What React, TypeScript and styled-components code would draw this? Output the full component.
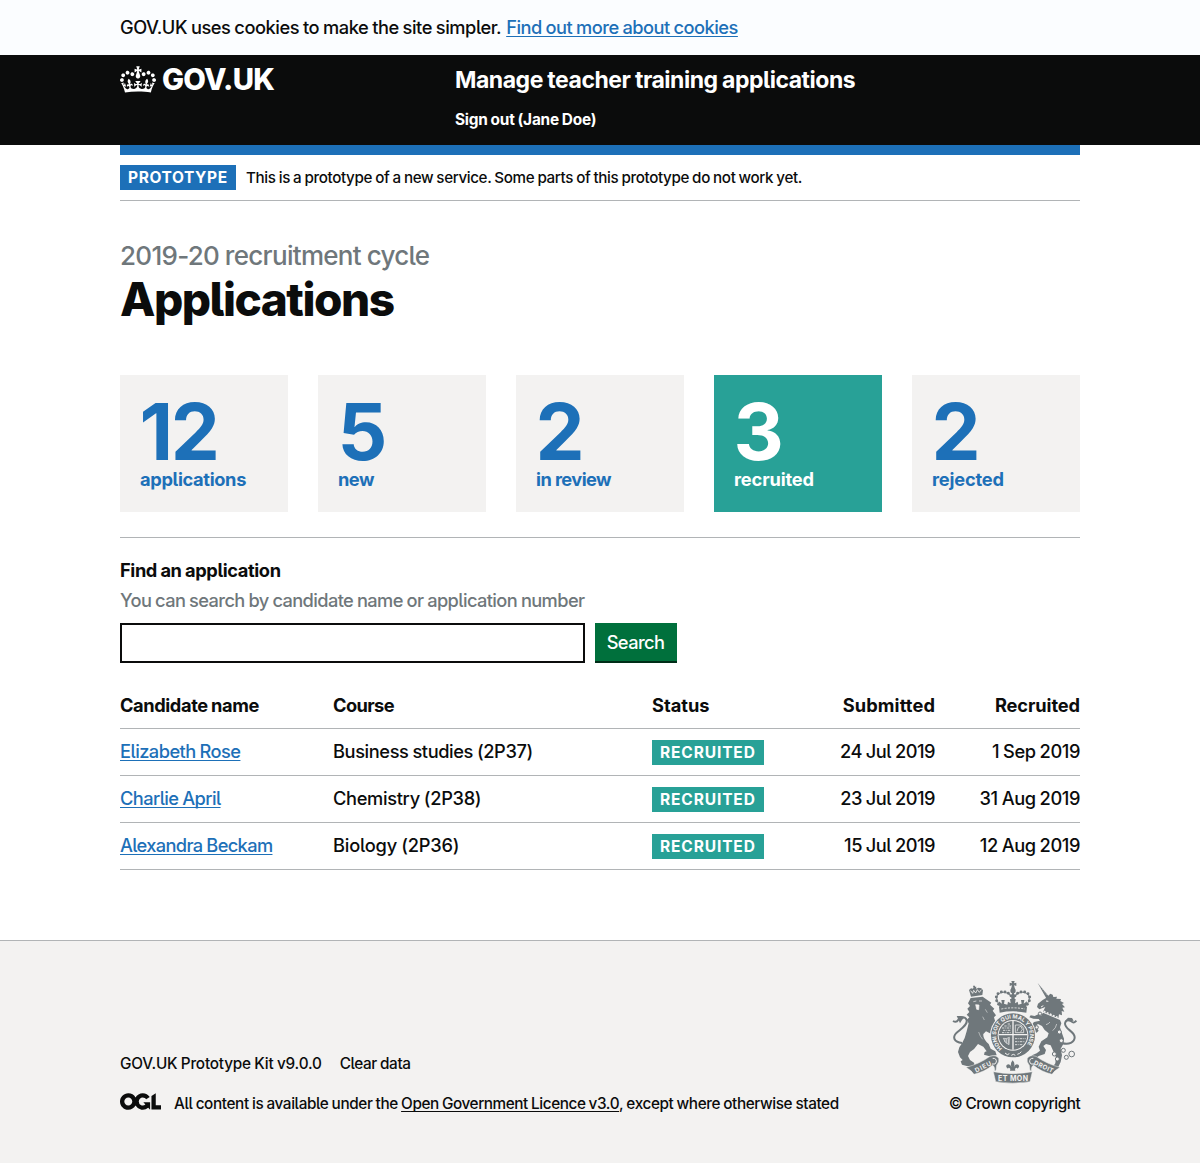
import React from "react";
import styled, { createGlobalStyle } from "styled-components";

const colour = {
  ink: "#0b0c0c",
  blue: "#1d70b8",
  teal: "#28a197",
  green: "#00703c",
  grey: "#6f777b",
  rule: "#b1b4b6",
  panel: "#f3f2f1",
  white: "#ffffff",
};

const GlobalStyle = createGlobalStyle`
  *, *::before, *::after { box-sizing: border-box; }
  body {
    margin: 0;
    background: ${colour.white};
    color: ${colour.ink};
    font-family: Inter, Roboto, "Liberation Sans", sans-serif;
    font-size: 18.25px;
    font-weight: 500;
    line-height: 25px;
    word-spacing: -0.5px;
    font-feature-settings: "cv05" 1;
  }
`;

/* A run of text with its own tracking */
const Tracked = styled.span<{ $ls: number }>`
  letter-spacing: ${(p) => p.$ls}px;
  white-space: nowrap;
`;

const Link = styled.a<{ $ls: number }>`
  color: ${colour.blue};
  letter-spacing: ${(p) => p.$ls}px;
  text-decoration: underline;
  text-decoration-thickness: 1px;
  text-underline-offset: 2px;
  text-decoration-skip-ink: none;
  white-space: nowrap;
`;

const Container = styled.div`
  width: 960px;
  margin: 0 auto;
`;

const CookieBar = styled.div`
  background: #fbfdff;
  padding: 15px 0;
`;

const CookieText = styled.p`
  display: flex;
  gap: 5px;
  margin: 0;
`;

const Header = styled.header`
  background: ${colour.ink};
  color: ${colour.white};
  height: 90px;
`;

const HeaderRow = styled(Container)`
  display: grid;
  grid-template-columns: 335px 1fr;
  padding-top: 9px;
`;

const Logo = styled.a`
  display: flex;
  align-items: center;
  gap: 6px;
  height: 30px;
  font-size: 29.3px;
  font-weight: 800;
  line-height: 32px;
  svg { display: block; }
`;

const LogoText = styled(Tracked)`
  padding-top: 2px;
`;

const ServiceName = styled.div`
  padding-top: 1px;
  font-size: 23px;
  font-weight: 700;
  line-height: 30px;
`;

const SignOut = styled.div`
  margin-top: 15px;
  font-size: 15.4px;
  font-weight: 700;
  line-height: 20px;
`;

const PhaseBanner = styled(Container)`
  display: flex;
  align-items: center;
  gap: 10px;
  height: 56px;
  padding: 10px 0;
  border-top: 10px solid ${colour.blue};
  border-bottom: 1px solid ${colour.rule};
  font-size: 15.2px;
`;

const Tag = styled.strong<{ $bg: string; $width: number; $ls: number }>`
  display: block;
  width: ${(p) => p.$width}px;
  height: 25px;
  padding-left: 8px;
  background: ${(p) => p.$bg};
  color: ${colour.white};
  font-size: 15.5px;
  font-weight: 700;
  line-height: 25px;
  letter-spacing: ${(p) => p.$ls}px;
  white-space: nowrap;
`;

const Main = styled(Container).attrs({ as: "main" })`
  padding: 40px 0 70px;
`;

const Caption = styled.div`
  color: ${colour.grey};
  font-size: 26px;
  line-height: 30px;
  letter-spacing: -0.7px;
`;

const Title = styled.h1`
  margin: 0 0 48px;
  font-size: 46px;
  font-weight: 800;
  line-height: 56px;
  letter-spacing: -1.5px;
`;

const Cards = styled.div`
  display: grid;
  grid-template-columns: repeat(5, 168px);
  gap: 30px;
  padding-bottom: 25px;
  border-bottom: 1px solid ${colour.rule};
`;

const Card = styled.a<{ $active?: boolean }>`
  display: flex;
  flex-direction: column;
  height: 137px;
  padding: 21px 20px 0;
  background: ${(p) => (p.$active ? colour.teal : colour.panel)};
  color: ${(p) => (p.$active ? colour.white : colour.blue)};
  font-weight: 700;
  word-spacing: 0;
`;

const Count = styled.div`
  margin-left: -0.5px;
  font-size: 78px;
  line-height: 71px;
  letter-spacing: -2.5px;
`;

const Field = styled.form`
  display: flex;
  flex-direction: column;
  padding: 20px 0;
`;

const Label = styled.label`
  font-weight: 700;
  letter-spacing: -0.39px;
`;

const Hint = styled.span`
  margin: 5px 0 10px;
  color: ${colour.grey};
  letter-spacing: -0.61px;
`;

const SearchRow = styled.div`
  display: flex;
  gap: 10px;
`;

const Input = styled.input`
  width: 465px;
  height: 40px;
  border: 2px solid ${colour.ink};
  border-radius: 0;
  background: ${colour.white};
`;

const Button = styled.button`
  width: 82px;
  height: 38px;
  padding: 0 1px 0 0;
  border: 0;
  background: ${colour.green};
  box-shadow: 0 2px 0 #002d18;
  color: ${colour.white};
  font: inherit;
  letter-spacing: -0.6px;
`;

const Table = styled.table`
  width: 960px;
  table-layout: fixed;
  border-collapse: collapse;
`;

const Head = styled.th<{ $width: number; $right?: boolean; $last?: boolean }>`
  width: ${(p) => p.$width}px;
  height: 45px;
  padding: 1px ${(p) => (p.$last ? 0 : 20)}px 0 0;
  border-bottom: 1px solid ${colour.rule};
  text-align: ${(p) => (p.$right ? "right" : "left")};
  font-weight: 700;
`;

const Cell = styled.td<{ $right?: boolean; $last?: boolean }>`
  height: 47px;
  padding: 0 ${(p) => (p.$last ? 0 : 20)}px 0 0;
  border-bottom: 1px solid ${colour.rule};
  text-align: ${(p) => (p.$right ? "right" : "left")};
`;

const TagSlot = styled.div`
  padding-top: 1px;
`;

const Footer = styled.footer`
  height: 223px;
  padding-top: 39px;
  border-top: 1px solid ${colour.rule};
  background: ${colour.panel};
  font-size: 15.3px;
  line-height: 20px;
`;

const FooterRow = styled(Container)`
  display: flex;
  justify-content: space-between;
  align-items: flex-end;
`;

const FooterMeta = styled.div`
  display: flex;
  flex-direction: column;
  gap: 20px;
`;

const FooterLine = styled.div<{ $gap: number }>`
  display: flex;
  align-items: center;
  gap: ${(p) => p.$gap}px;
`;

const OglIcon = styled.svg`
  display: block;
  margin-top: -4px;
`;

const FooterLink = styled(Link)`
  color: ${colour.ink};
`;

const Copyright = styled.div`
  display: flex;
  flex-direction: column;
  align-items: center;
  gap: 10px;
  width: 131px;
`;

const CrownIcon = () => (
  <svg width="36" height="27" viewBox="0 0 132 97" fill="currentColor" aria-hidden="true">
    <path
      fillRule="evenodd"
      d="M25 30.2c3.5 1.5 7.7-.2 9.1-3.7 1.5-3.6-.2-7.8-3.9-9.2-3.6-1.4-7.6.3-9.1 3.9-1.4 3.5.3 7.5 3.9 9zM9 39.5c3.6 1.5 7.8-.2 9.2-3.7 1.5-3.6-.2-7.8-3.9-9.1-3.6-1.5-7.6.2-9.1 3.8-1.4 3.5.3 7.5 3.8 9zM4.4 57.2c3.5 1.5 7.7-.2 9.1-3.8 1.5-3.6-.2-7.7-3.9-9.1-3.5-1.5-7.6.3-9.1 3.8-1.4 3.5.3 7.6 3.9 9.1zm38.3-21.4c3.5 1.5 7.7-.2 9.1-3.8 1.5-3.6-.2-7.7-3.9-9.1-3.6-1.5-7.6.3-9.1 3.8-1.3 3.6.4 7.7 3.9 9.1zm64.4-5.6c-3.6 1.5-7.8-.2-9.1-3.7-1.5-3.6.2-7.8 3.8-9.2 3.6-1.4 7.7.3 9.2 3.9 1.3 3.5-.4 7.5-3.9 9zm15.9 9.3c-3.6 1.5-7.7-.2-9.1-3.7-1.5-3.6.2-7.8 3.7-9.1 3.6-1.5 7.7.2 9.2 3.8 1.5 3.5-.3 7.5-3.8 9zm4.7 17.7c-3.6 1.5-7.8-.2-9.2-3.8-1.5-3.6.2-7.7 3.9-9.1 3.6-1.5 7.7.3 9.2 3.8 1.3 3.5-.4 7.6-3.9 9.1zM89.3 35.8c-3.6 1.5-7.8-.2-9.2-3.8-1.4-3.6.2-7.7 3.9-9.1 3.6-1.5 7.7.3 9.2 3.8 1.4 3.6-.3 7.7-3.9 9.1zM69.7 17.7l8.9 4.7V9.3l-8.9 2.8c-.2-.3-.5-.6-.9-.9L72.4 0H59.6l3.5 11.2c-.3.3-.6.5-.9.9l-8.8-2.8v13.1l8.8-4.7c.3.3.6.7.9.9l-5 15.4v.1c-.2.8-.4 1.6-.4 2.4 0 4.1 3.1 7.5 7 8.1h.2c.3 0 .7.1 1 .1.4 0 .7 0 1-.1h.2c4-.6 7.1-4.1 7.1-8.1 0-.8-.1-1.7-.4-2.4V34l-5.1-15.4c.4-.2.7-.6 1-.9zM66 92.8c16.9 0 32.8 1.1 47.1 3.2 4-16.9 8.9-26.7 14-33.5l-9.6-3.4c1 4.9 1.1 7.2 0 10.2-1.5-1.4-3-4.3-4.2-8.7L108.6 76c2.8-2 5-3.2 7.5-3.3-4.4 9.4-10 11.9-13.6 11.2-4.3-.8-6.3-4.6-5.6-7.9 1-4.7 5.7-5.9 8-.5 4.3-8.7-3-11.4-7.6-8.8 7.1-7.2 7.9-13.5 2.1-21.1-8 6.1-8.1 12.3-4.5 20.8-4.7-5.4-12.1-2.5-9.5 6.2 3.4-5.2 7.9-2 7.2 3.1-.6 4.3-6.4 7.8-13.5 7.2-10.3-.9-10.9-8-11.2-13.8 2.5-.5 7.1 1.8 11 7.3L80.2 60c-4.1 4.4-8 5.3-12.3 5.4 1.4-4.4 8-11.6 8-11.6H55.5s6.4 7.2 7.9 11.6c-4.2-.1-8-1-12.3-5.4l1.4 16.4c3.9-5.5 8.5-7.7 10.9-7.3-.3 5.8-.9 12.8-11.1 13.8-7.2.6-12.9-2.9-13.5-7.2-.7-5 3.8-8.3 7.1-3.1 2.7-8.7-4.6-11.6-9.4-6.2 3.7-8.5 3.6-14.7-4.6-20.8-5.8 7.6-5 13.9 2.2 21.1-4.7-2.6-11.9.1-7.7 8.8 2.3-5.5 7.1-4.2 8.1.5.7 3.3-1.3 7.1-5.7 7.9-3.5.7-9-1.8-13.5-11.2 2.5.1 4.7 1.3 7.5 3.3l-4.7-15.4c-1.2 4.4-2.7 7.2-4.3 8.7-1.1-3-.9-5.3 0-10.2l-9.5 3.4c5 6.9 9.9 16.7 14 33.5 14.8-2.1 30.8-3.2 47.7-3.2z"
    />
  </svg>
);

const OglLogo = () => (
  <OglIcon width="41" height="17" viewBox="0 0 483.2 195.7" fill="currentColor" aria-hidden="true">
    <path d="M421.5 142.8V.1l-50.7 32.3v161.1h112.4v-50.7zm-122.3-9.6A47.12 47.12 0 0 1 221 97.8c0-26 21.1-47.1 47.1-47.1 16.7 0 31.4 8.7 39.7 21.8l42.7-27.2A97.63 97.63 0 0 0 268.1 0c-36.5 0-68.3 20.1-85.1 49.7A98 98 0 0 0 97.8 0C43.9 0 0 43.9 0 97.8s43.9 97.8 97.8 97.8c36.5 0 68.3-20.1 85.1-49.7a97.76 97.76 0 0 0 149.6 25.4l19.4 22.2h3v-87.8h-80l24.3 27.5zM97.8 145c-26 0-47.1-21.1-47.1-47.1s21.1-47.1 47.1-47.1 47.1 21.1 47.1 47.1S123.8 145 97.8 145" />
  </OglIcon>
);

const CrestText = styled.text`
  fill: ${colour.panel};
  font-family: Inter, "Liberation Sans", sans-serif;
  font-weight: 700;
  word-spacing: 0;
`;

const archDots = [
  [176, 103], [170, 92], [169, 81], [174, 71], [184, 66], [195, 66], [205, 70], [213, 77],
];

const RoyalArms = () => {
  const g = "#6f777b";
  const bg = colour.panel;
  return (
    <svg width="128" height="104" viewBox="33 30 384 312" fill={g} aria-hidden="true">
      {/* centre crown */}
      <path d="M214 33h10l-2 7 7-2v10l-7-2 3 11h-12l3-11-7 2V38l7 2z" />
      <circle cx="219" cy="62" r="8" />
      <path d="M216 68h6v24h-6z" />
      <path d="M177 103C162 82 174 67 190 67c14 0 23 8 26 20M261 103c15-21 3-36-13-36-14 0-23 8-26 20" fill="none" stroke={g} strokeWidth="3" />
      {archDots.map(([x, y]) => (
        <React.Fragment key={`${x}-${y}`}>
          <circle cx={x} cy={y} r="4.4" />
          <circle cx={438 - x} cy={y} r="4.4" />
        </React.Fragment>
      ))}
      <path d="M178 112l-2-18 10 7-2-11h10l-2 11 10 3 2-9 8 5-2-13h17l-2 13 8-5 2 9 10-3-2-11h10l-2 11 10-7-2 18z" />
      <path d="M177 111q42-10 84 0l-2 17q-40-8-80 0z" />
      <path d="M184 117q35-7 71 0" fill="none" stroke={bg} strokeWidth="2.5" strokeDasharray="6 4" />

      {/* lion: tail, crown, body */}
      <path d="M66 219C42 216 36 202 50 188c14-12 34-24 30-38-4-11-18-11-25-1-4 7-9 8-16 4" fill="none" stroke={g} strokeWidth="6" />
      <path d="M54 146l-4-8 14 0 10 4-8 8-6 10z" />
      <path d="M90 70l-3-10 6-5 6 1 2-6h-2v-3h6v3h4l-1 6 8-3 8 2 5 6-2 14-34 5z" />
      <path d="M92 62l6 8 3-9 6 8 5-10 6 8 6-8" fill="none" stroke={bg} strokeWidth="2.5" />
      <path d="M92 84L128 80 142 90 154 98 150 104 163 116 158 122 168 136 162 142 166 156 158 168 164 178 168 196 160 206 152 200 150 190 138 184 130 192Q128 206 146 222L152 236 166 244 170 256 146 258 132 254 134 246 140 244 130 230 114 222Q104 238 90 246L84 258 90 270 102 278 104 288 80 288 66 284 62 274 68 270 60 262 54 246 58 232 66 220 74 204 80 184 86 160 80 150 88 142 80 134 88 126 82 116 90 108 84 100Z" />
      <path d="M100 95l9-2M117 93l9 0M107 104l10 1-1 14-6-1z" fill={bg} stroke={bg} strokeWidth="2" />
      <path d="M136 118l6 10M128 140l5 10M116 186q4 14 12 22" fill="none" stroke={bg} strokeWidth="1.5" />

      {/* unicorn: horn, head, body, tail */}
      <path d="M293 39l35 42-8 6z" />
      <path d="M299 47l22 29" stroke={bg} strokeWidth="1.4" strokeDasharray="2.5 4" />
      <path d="M318 84l13-13 7 3 2 7 11-1-2 6 14 1-2 6 11 6-6 3 9 10-8 1 6 12-8-2 1 13-9-3-2 12-46-20 7-14-10 4-8 3-7-7 3-10 14-11z" />
      <path d="M318 93l7 1M303 111l7-4" stroke={bg} strokeWidth="3" />
      <path d="M311 124l49 22" stroke={bg} strokeWidth="5" strokeDasharray="6 4" />
      <path d="M309 128L360 150 364 160 360 172 366 190 372 206 370 222 362 236 366 256 362 276 352 296 336 294 346 280 348 262 340 244 332 226 318 222 310 228 318 240 314 252 296 258 284 268 270 264 276 256 290 250 300 242 296 230 304 214 322 202 326 190 314 180 306 168 294 162 286 168 296 182 290 188 280 184 272 168 282 156 300 152 296 147 280 146 268 142 272 136 284 138 296 132 303 137Z" />
      <path d="M350 162q-2 12-12 20M330 156q-4 6-12 8" fill="none" stroke={bg} strokeWidth="1.8" />
      <path d="M366 219c20 7 38-2 38-17 0-18-30-24-29-42 2-11 13-12 20-5 5 5 10 2 14-3" fill="none" stroke={g} strokeWidth="6" />
      <path d="M376 152l8-9 12 1 5 8-13 2z" />
      <g fill={bg} stroke={g} strokeWidth="3">
        <circle cx="300" cy="131" r="5" /><circle cx="290" cy="172" r="5" />
        <circle cx="358" cy="186" r="6" /><circle cx="364" cy="212" r="6" /><circle cx="343" cy="252" r="6" />
        <circle cx="352" cy="267" r="6" /><circle cx="370" cy="241" r="6" /><circle cx="379" cy="262" r="6" /><circle cx="395" cy="252" r="8.5" />
      </g>

      {/* garter and shield */}
      <circle cx="219" cy="196" r="69" fill={bg} />
      <circle cx="219" cy="196" r="66" />
      <circle cx="219" cy="196" r="46" fill={bg} />
      <defs>
        <path id="garter" d="M187 235a50.5 50.5 0 1 1 64 0" />
      </defs>
      <CrestText fontSize="16.5" textLength="232" lengthAdjust="spacing">
        <textPath href="#garter">HONI SOIT QUI MAL Y PENSE</textPath>
      </CrestText>
      <path d="M195 249l7 5 6-3M214 256l6-3 6 3M232 253l7-3 5-5" fill="none" stroke={bg} strokeWidth="3" />
      <circle cx="219" cy="196" r="43" />
      <path d="M219 153v86M176 194h86" stroke={bg} strokeWidth="4" />
      <path d="M186 174h27M189 181h24M193 168h20M203 162h10M225 206h32M225 215h29M225 224h22M186 188h27" stroke={bg} strokeWidth="2.4" strokeDasharray="7 3 3 2" />
      <path d="M226 165h17l8 10v13h-25zM231 184l4-12 8-3 4 9-5 8" fill="none" stroke={bg} strokeWidth="2.2" />
      <path d="M190 205q10 3 18-3l-1 22q-13-4-17-19zM195 207v9M200 206v14M205 205v16" fill="none" stroke={bg} strokeWidth="2" />

      {/* scroll */}
      <path d="M78 292q40-10 72-33 20-6 26 6 3 10-6 21l-2 16-4 0q0-14-7-16-20 18-55 27-8-12-24-21z" stroke={bg} strokeWidth="1.5" />
      <path d="M158 265q12-1 11 11-2 9-13 6" fill="none" stroke={bg} strokeWidth="3" />
      <path d="M360 292q-40-10-72-33-20-6-26 6-3 10 6 21l2 16 4 0q0-14 7-16 20 18 55 27 8-12 24-21z" stroke={bg} strokeWidth="1.5" />
      <path d="M280 265q-12-1-11 11 2 9 13 6" fill="none" stroke={bg} strokeWidth="3" />
      <path d="M160 305q58 12 117 0l-7 30q-52 9-103 0z" stroke={bg} strokeWidth="1.5" />
      <CrestText fontSize="19" textLength="52" transform="translate(109 308) rotate(-27)">DIEU</CrestText>
      <CrestText fontSize="19" textLength="62" transform="translate(280 283) rotate(25)">DROIT</CrestText>
      <CrestText fontSize="21" textLength="90" x="174" y="332">ET MON</CrestText>

      {/* fleur-de-lis */}
      <path d="M218 271q9 9 3 21 5-12 14-8 6 6-3 12-2-6-7 1l1 5h-16l1-5q-5-7-7-1-9-6-3-12 9-4 14 8-6-12 3-21z" />
    </svg>
  );
};

const cards = [
  { count: "12", label: "applications", ls: -0.34 },
  { count: "5", label: "new", ls: -0.5 },
  { count: "2", label: "in review", ls: -0.57 },
  { count: "3", label: "recruited", ls: -0.14, active: true },
  { count: "2", label: "rejected", ls: -0.2 },
];

const columns = [
  { label: "Candidate name", width: 213, ls: -0.41 },
  { label: "Course", width: 319, ls: -0.6 },
  { label: "Status", width: 170, ls: 0 },
  { label: "Submitted", width: 133, ls: 0.1, right: true },
  { label: "Recruited", width: 125, ls: -0.1, right: true, last: true },
];

const candidates = [
  { name: "Elizabeth Rose", nameLs: -0.55, course: "Business studies (2P37)", courseLs: -0.41, submitted: "24 Jul 2019", recruited: "1 Sep 2019" },
  { name: "Charlie April", nameLs: -0.6, course: "Chemistry (2P38)", courseLs: -0.33, submitted: "23 Jul 2019", recruited: "31 Aug 2019" },
  { name: "Alexandra Beckam", nameLs: -0.64, course: "Biology (2P36)", courseLs: -0.2, submitted: "15 Jul 2019", recruited: "12 Aug 2019" },
];

export default function App() {
  return (
    <>
      <GlobalStyle />
      <CookieBar>
        <Container>
          <CookieText>
            <Tracked $ls={-0.46}>GOV.UK uses cookies to make the site simpler.</Tracked>
            <Link $ls={-0.52}>Find out more about cookies</Link>
          </CookieText>
        </Container>
      </CookieBar>
      <Header>
        <HeaderRow>
          <Logo>
            <CrownIcon />
            <LogoText $ls={-0.7}>GOV.UK</LogoText>
          </Logo>
          <div>
            <ServiceName>
              <Tracked $ls={-0.47}>Manage teacher training applications</Tracked>
            </ServiceName>
            <SignOut>
              <Tracked $ls={-0.22}>Sign out (Jane Doe)</Tracked>
            </SignOut>
          </div>
        </HeaderRow>
      </Header>
      <PhaseBanner>
        <Tag $bg={colour.blue} $width={116} $ls={0.6}>PROTOTYPE</Tag>
        <Tracked $ls={-0.38}>This is a prototype of a new service. Some parts of this prototype do not work yet.</Tracked>
      </PhaseBanner>
      <Main>
        <Caption>2019-20 recruitment cycle</Caption>
        <Title>Applications</Title>
        <Cards>
          {cards.map((c) => (
            <Card key={c.label} $active={c.active}>
              <Count>{c.count}</Count>
              <Tracked $ls={c.ls}>{c.label}</Tracked>
            </Card>
          ))}
        </Cards>
        <Field>
          <Label htmlFor="search">Find an application</Label>
          <Hint>You can search by candidate name or application number</Hint>
          <SearchRow>
            <Input id="search" />
            <Button type="button">Search</Button>
          </SearchRow>
        </Field>
        <Table>
          <thead>
            <tr>
              {columns.map((c) => (
                <Head key={c.label} $width={c.width} $right={c.right} $last={c.last}>
                  <Tracked $ls={c.ls}>{c.label}</Tracked>
                </Head>
              ))}
            </tr>
          </thead>
          <tbody>
            {candidates.map((c) => (
              <tr key={c.name}>
                <Cell><Link $ls={c.nameLs}>{c.name}</Link></Cell>
                <Cell><Tracked $ls={c.courseLs}>{c.course}</Tracked></Cell>
                <Cell>
                  <TagSlot>
                    <Tag $bg={colour.teal} $width={112} $ls={0.87}>RECRUITED</Tag>
                  </TagSlot>
                </Cell>
                <Cell $right><Tracked $ls={-0.5}>{c.submitted}</Tracked></Cell>
                <Cell $right $last><Tracked $ls={-0.42}>{c.recruited}</Tracked></Cell>
              </tr>
            ))}
          </tbody>
        </Table>
      </Main>
      <Footer>
        <FooterRow>
          <FooterMeta>
            <FooterLine $gap={18}>
              <Tracked $ls={-0.18}>GOV.UK Prototype Kit v9.0.0</Tracked>
              <Tracked $ls={-0.38}>Clear data</Tracked>
            </FooterLine>
            <FooterLine $gap={13}>
              <OglLogo />
              <span>
                <Tracked $ls={-0.38}>All content is available under the </Tracked>
                <FooterLink $ls={-0.42}>Open Government Licence v3.0</FooterLink>
                <Tracked $ls={-0.39}>, except where otherwise stated</Tracked>
              </span>
            </FooterLine>
          </FooterMeta>
          <Copyright>
            <RoyalArms />
            <Tracked $ls={-0.42}>© Crown copyright</Tracked>
          </Copyright>
        </FooterRow>
      </Footer>
    </>
  );
}
